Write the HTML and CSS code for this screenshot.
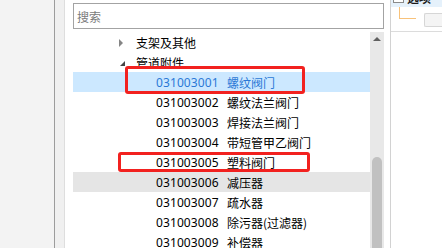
FILE: index.html
```html
<!DOCTYPE html>
<html lang="zh-CN">
<head>
    <meta charset="UTF-8">
    <title>清单树</title>
    <link rel="stylesheet" href="styles.css">
</head>
<body>
    <div class="window">
        <div class="side"></div>
        <div class="gutter"></div>

        <div class="main">
            <input class="search" type="text" placeholder="搜索">
            <div class="tree">
                <div class="rows">
                    <div class="row group"><span class="arrow closed"></span><span>支架及其他</span></div>
                    <div class="row group"><span class="arrow open"></span><span>管道附件</span></div>
                    <div class="row item selected"><span class="code">031003001</span><span>螺纹阀门</span></div>
                    <div class="row item"><span class="code">031003002</span><span>螺纹法兰阀门</span></div>
                    <div class="row item"><span class="code">031003003</span><span>焊接法兰阀门</span></div>
                    <div class="row item"><span class="code">031003004</span><span>带短管甲乙阀门</span></div>
                    <div class="row item"><span class="code">031003005</span><span>塑料阀门</span></div>
                    <div class="row item hover"><span class="code">031003006</span><span>减压器</span></div>
                    <div class="row item"><span class="code">031003007</span><span>疏水器</span></div>
                    <div class="row item"><span class="code">031003008</span><span>除污器(过滤器)</span></div>
                    <div class="row item"><span class="code">031003009</span><span>补偿器</span></div>
                </div>
                <div class="scrollbar">
                    <div class="scroll-up"><span></span></div>
                    <div class="thumb"></div>
                </div>
            </div>
        </div>

        <div class="panel">
            <div class="panel-top">
                <span class="check"></span>
                <span class="panel-label">选项</span>
            </div>
            <div class="panel-row">
                <div class="link"></div>
                <div class="mini-btn"></div>
            </div>
        </div>
    </div>

    <!-- annotation boxes -->
    <div class="mark mark-1"></div>
    <div class="mark mark-2"></div>
</body>
</html>
```

FILE: styles.css
```css
body {
    margin: 0;
    width: 442px;
    height: 248px;
    overflow: hidden;
    position: relative;
    background: #fff;
    font-family: "Noto Sans", "Noto Sans CJK SC", sans-serif;
    font-size: 12px;
    color: #000;
}
.window {
    display: flex;
    height: 248px;
}
.side {
    width: 54px;
    background: #f3f3f3;
    border-right: 1px solid #9c9c9c;
}
.gutter {
    width: 9px;
    background: #f0f0f0;
    border-right: 1px solid #dedede;
}
.main {
    width: 311px;
    padding: 3px 6px 0 8px;
    border-right: 1px solid #d2d2d2;
    display: flex;
    flex-direction: column;
    overflow: hidden;
}
.search {
    box-sizing: border-box;
    flex-shrink: 0;
    width: 311px;
    height: 26px;
    margin: 0;
    padding: 0 3px;
    border: 1px solid #a3a3a3;
    font-family: "Noto Sans CJK SC", sans-serif;
    font-size: 12px;
    outline: none;
}
.search::placeholder {
    color: #7b7b7b;
}
.tree {
    display: flex;
    margin-top: 3px;
    flex: 1;
    min-height: 0;
}
.rows {
    width: 297px;
}
.row {
    height: 20px;
    display: flex;
    align-items: center;
    white-space: nowrap;
    font-family: "Noto Sans CJK SC", sans-serif;
}
.row.group {
    padding-left: 46px;
}
.row.item {
    padding-left: 83px;
}
.row .code {
    width: 71px;
    font-family: "Noto Sans", sans-serif;
    letter-spacing: 0.1px;
}
.row.selected {
    background: #cce8ff;
    color: #2b78d6;
}
.row.hover {
    background: #e5e5e5;
}
.arrow {
    width: 17px;
    display: flex;
    align-items: center;
}
.arrow::before {
    content: "";
    width: 0;
    height: 0;
}
.arrow.closed::before {
    border-left: 4px solid #858585;
    border-top: 4px solid transparent;
    border-bottom: 4px solid transparent;
    margin-top: 1px;
}
.arrow.open::before {
    border-right: 5px solid #454545;
    border-top: 5px solid transparent;
    margin: 2px 0 0 1px;
}
.scrollbar {
    width: 14px;
    background: #e8e8e8;
    display: flex;
    flex-direction: column;
}
.scroll-up {
    height: 17px;
    display: flex;
    justify-content: center;
    align-items: center;
}
.scroll-up span {
    width: 0;
    height: 0;
    border-bottom: 4px solid #606060;
    border-left: 4px solid transparent;
    border-right: 4px solid transparent;
    margin-top: -3px;
}
.thumb {
    margin: 108px 2px 0;
    flex: 1;
    background: #c1c1c1;
    border-radius: 5px 5px 0 0;
}
.panel {
    flex: 1;
    overflow: hidden;
}
.panel-top {
    height: 20px;
    margin-top: -13px;
    background: #e5f1fb;
    display: flex;
    align-items: center;
    padding-left: 2px;
    gap: 3px;
}
.check {
    width: 9px;
    height: 9px;
    border: 1px solid #8a8a8a;
    background: #fff;
}
.panel-label {
    font-family: "Noto Sans CJK SC", sans-serif;
    font-weight: bold;
    color: #1a1a1a;
}
.panel-row {
    height: 24px;
    display: flex;
    border-bottom: 1px solid #dcdcdc;
}
.link {
    margin-left: 8px;
    width: 16px;
    height: 11px;
    border-left: 1px solid #f8c27a;
    border-bottom: 1px solid #f8c27a;
}
.mini-btn {
    margin: 6px 0 0 auto;
    width: 24px;
    flex-shrink: 0;
    height: 12px;
    border: 1px solid #d6d6d6;
    border-right: none;
    border-radius: 2px 0 0 2px;
    background: #f4f4f4;
    position: relative;
    left: 7px;
}
.mark {
    position: absolute;
    border: 3px solid #f2211f;
    border-radius: 3px;
    box-sizing: border-box;
}
.mark-1 {
    left: 125px;
    top: 66px;
    width: 180px;
    height: 28px;
}
.mark-2 {
    left: 118px;
    top: 152px;
    width: 192px;
    height: 20px;
}
```
